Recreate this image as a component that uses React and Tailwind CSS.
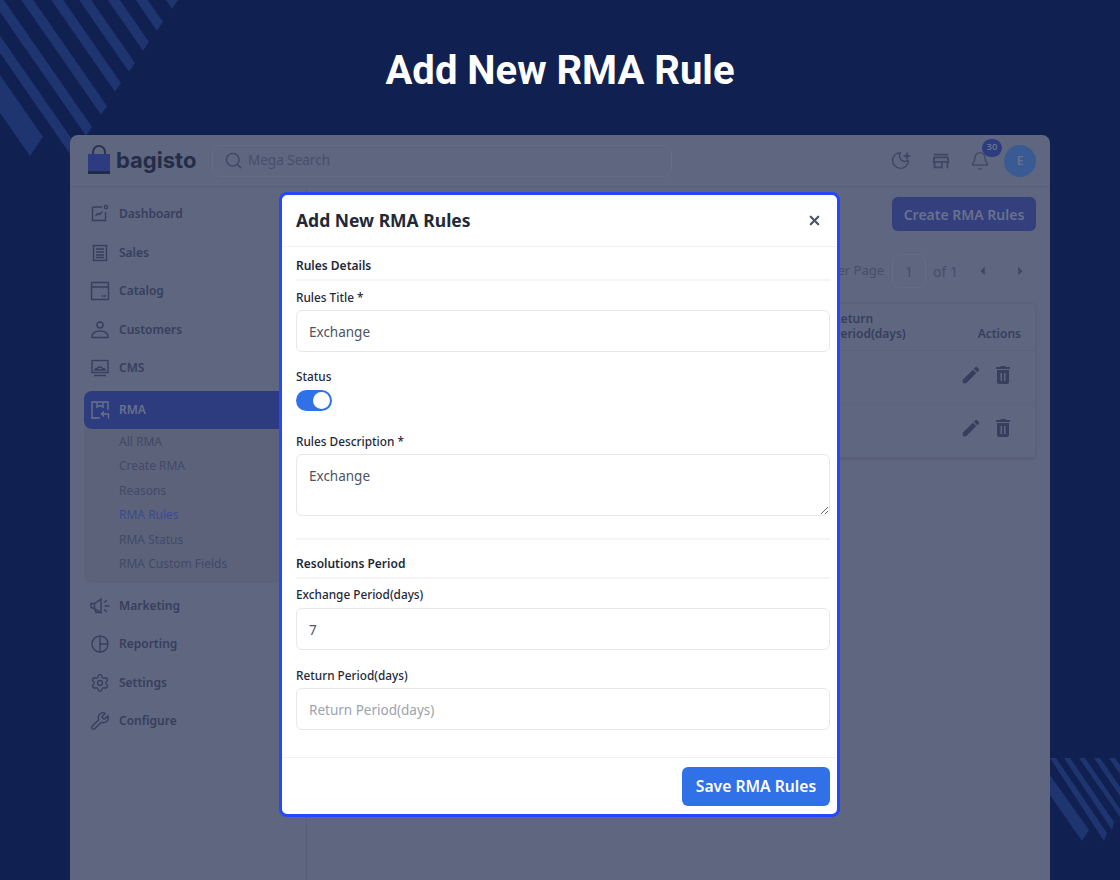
import React from "react";
import { Search, Moon, Bell, Settings, Wrench, X, Sparkle } from "lucide-react";
import { MdEdit, MdArrowLeft, MdArrowRight, MdOutlineStore } from "react-icons/md";

const ubuntu = "font-['Noto_Sans','Open_Sans',sans-serif]";

// stripes: tip corner of each band, width is the step back along the cut
const topStripes = [
    [178, 0, 6], [163, 22, 6], [149, 42, 6], [135, 63, 6], [121, 83, 6], [107, 106, 6], [92, 127, 6], [78, 148, 6], [43, 137, 13],
];
const bottomStripes = [
    "1050,775 1089,830 1082,841 1050,795",
    "1050,758 1056,758 1107,833 1104,841",
    "1064,758 1070,758 1114,822 1112,830",
    "1079,758 1085,758 1120,809 1120,817",
    "1094,758 1100,758 1120,787 1120,796",
    "1109,758 1115,758 1120,765 1120,774",
];

const Stripes = () => (
    <svg className="absolute left-0 top-0 h-[880px] w-[1120px]" viewBox="0 0 1120 880">
        {topStripes.map(([x, y, t], i) => (
            <polygon
                key={i}
                fill="#1f3570"
                points={`${x},${y} ${x - t},${y + t * 1.46} ${x - t - 200},${y + t * 1.46 - 288} ${x - 200},${y - 288}`}
            />
        ))}
        {bottomStripes.map((p, i) => (
            <polygon key={i} fill="#1f3570" points={p} />
        ))}
    </svg>
);

const Logo = () => (
    <div className="flex items-center gap-[5px]">
        <svg width="24" height="32" viewBox="0 0 24 32">
            <path d="M6 11V7a6 6 0 0 1 12 0v4" fill="none" stroke="#2a3350" strokeWidth="2" />
            <rect x="1" y="9" width="22" height="19" fill="#2d3c80" />
            <rect x="1" y="26" width="22" height="3" fill="#222b45" />
        </svg>
        <span className="w-[81px] font-['Inter',sans-serif] text-[22px] font-bold text-[#242c48]">bagisto</span>
    </div>
);

const iconProps = {
    width: 20,
    height: 20,
    viewBox: "0 0 20 20",
    fill: "none",
    stroke: "#363f5e",
    strokeWidth: 1.4,
};

const DashIcon = () => (
    <svg {...iconProps}>
        <path d="M12 3H3.5a1 1 0 0 0-1 1v12.5h13V8" />
        <circle cx="16" cy="3" r="1.6" />
        <path d="M5.5 12l2.5-2.5 1.5 1 3-3" />
    </svg>
);
const SalesIcon = () => (
    <svg {...iconProps}>
        <rect x="3.5" y="2.5" width="13" height="15" />
        <path d="M6 6h8M6 9h8M6 12h8M6 14.5h8" />
    </svg>
);
const CatalogIcon = () => (
    <svg {...iconProps}>
        <rect x="1.5" y="1.5" width="17" height="17" rx="0.5" />
        <path d="M1.5 6h17M12.5 14v2M15 14v2" />
    </svg>
);
const CustomersIcon = () => (
    <svg {...iconProps}>
        <circle cx="10" cy="5" r="3" />
        <path d="M2 17.5v-1c0-3.5 3.5-5.5 8-5.5s8 2 8 5.5v1z" />
    </svg>
);
const CmsIcon = () => (
    <svg {...iconProps}>
        <rect x="2" y="2.5" width="16" height="12" />
        <path d="M5 12c0-1.500 1.500-1.500 2.500-1.500 0-2 4.500-2 5 0 1 0 2.500 0 2.500 1.500zM4 17.500h12" />
    </svg>
);
const RmaIcon = () => (
    <svg {...iconProps} stroke="#69718d">
        <path d="M18 10V2H2v16h8M7 2v5l3-1.500L13 7V2" />
        <path d="M18.500 18.500V14H12M14 11.500L11.500 14l2.500 2.500" />
    </svg>
);
const MarketingIcon = () => (
    <svg {...iconProps}>
        <path d="M11 3L4.500 7.500H1v4l3.500 1 6.500 4.500zM4.500 7.500v5l1.500 4h2.500l-1-2.500M14 6.500l3-2.500M14.500 10h5M14 13.500l3 2.500" />
    </svg>
);
const ReportingIcon = () => (
    <svg {...iconProps}>
        <circle cx="10" cy="10" r="8" />
        <path d="M10 2v16M10 10h8" />
    </svg>
);
const TrashIcon = () => (
    <svg width="24" height="24" viewBox="0 0 24 24" fill="#363f5e">
        <path
            fillRule="evenodd"
            d="M5 4h4l1-1h4l1 1h4v2H5zM6 7h12v12a2 2 0 0 1-2 2H8a2 2 0 0 1-2-2zM9.500 10v8h1.500v-8zM13 10v8h1.500v-8z"
        />
    </svg>
);

const NavItem = ({ Icon, label }) => (
    <div className="flex h-[38.5px] items-center gap-[9px] pl-[20px]">
        <span className="flex w-[20px] justify-center"><Icon /></span>
        <span className="text-[12px] font-semibold text-[#363f5e]">{label}</span>
    </div>
);

const Sidebar = () => (
    <aside className="flex w-[237px] shrink-0 flex-col border-r border-[#575e77] pt-[8px]">
        <NavItem Icon={DashIcon} label="Dashboard" />
        <NavItem Icon={SalesIcon} label="Sales" />
        <NavItem Icon={CatalogIcon} label="Catalog" />
        <NavItem Icon={CustomersIcon} label="Customers" />
        <NavItem Icon={CmsIcon} label="CMS" />
        <div className="mt-[3px] ml-[14px] w-[210px] rounded-lg bg-[#5b6279]">
            <div className="flex h-[38px] items-center gap-[9px] rounded-lg bg-[#2d3c7e] pl-[6px]">
                <span className="flex w-[20px] justify-center"><RmaIcon /></span>
                <span className="pt-[1px] text-[12px] font-semibold text-[#69718d]">RMA</span>
            </div>
            <div className="flex flex-col pb-[6px] pl-[35px] pt-[1px] text-[12px] text-[#414a68]">
                {["All RMA", "Create RMA", "Reasons", "RMA Rules", "RMA Status", "RMA Custom Fields"].map((s) => (
                    <span key={s} className={`flex h-[24.5px] items-center ${s === "RMA Rules" ? "text-[#3b4a92]" : ""}`}>
                        {s}
                    </span>
                ))}
            </div>
        </div>
        <div className="mt-[4px]">
            <NavItem Icon={MarketingIcon} label="Marketing" />
            <NavItem Icon={ReportingIcon} label="Reporting" />
            <NavItem Icon={() => <Settings size={20} strokeWidth={1.6} color="#363f5e" />} label="Settings" />
            <NavItem Icon={() => <Wrench size={20} strokeWidth={1.6} color="#363f5e" />} label="Configure" />
        </div>
    </aside>
);

const Header = () => (
    <header className="flex h-[52px] shrink-0 items-center justify-between border-b border-[#585f78] pl-[17px] pr-[14px]">
        <div className="flex items-center gap-[15px]">
            <Logo />
            <div className="flex h-[32px] w-[460px] items-center gap-[5px] rounded-lg border border-[#656c85] pl-[11px]">
                <Search size={19} strokeWidth={1.8} color="#3e4763" />
                <span className="text-[13.5px] text-[#464f6c]">Mega Search</span>
            </div>
        </div>
        <div className="flex items-center">
            <span className="relative">
                <Moon size={21} strokeWidth={1.6} color="#3e4763" />
                <Sparkle size={8} className="absolute right-[0px] top-[2px]" color="#3e4763" fill="#3e4763" />
            </span>
            <MdOutlineStore size={22} color="#3e4763" className="ml-[19px]" />
            <span className="relative ml-[18px]">
                <Bell size={20} strokeWidth={1.6} color="#3e4763" />
                <span className="absolute left-[12px] top-[-12px] flex h-[18px] w-[20px] items-center justify-center rounded-full bg-[#2d3c7e] text-[9.5px] font-semibold text-[#69718d]">30</span>
            </span>
            <span className="ml-[14px] flex h-[32px] w-[32px] items-center justify-center rounded-full bg-[#3a5a94] text-[12px] font-semibold text-[#69718d]">E</span>
        </div>
    </header>
);

const Main = () => (
    <main className="flex flex-1 flex-col items-end pr-[14px] pt-[10px]">
        <button className="h-[34px] w-[144px] rounded-md bg-[#343f7e] text-[14px] font-semibold text-[#69718d]">Create RMA Rules</button>
        <div className="mt-[23px] flex h-[34px] items-center text-[14px] text-[#464f6c]">
            <span className="text-[13px]">Per Page</span>
            <span className="ml-[8px] flex h-[34px] w-[34px] items-center justify-center rounded-lg border border-[#656c85]">1</span>
            <span className="ml-[7px]">of 1</span>
            <MdArrowLeft size={20} className="ml-[15px]" color="#3e4763" />
            <MdArrowRight size={20} className="ml-[17px] mr-[6px]" color="#3e4763" />
        </div>
        <div className="mt-[15px] w-full rounded border border-[#5a6179] shadow-sm">
            <div className="flex h-[47px] items-end justify-between border-b border-[#5a6179] pb-[9px] pl-[525px] pr-[14px] text-[12px] font-semibold leading-[15px] text-[#363f5e]">
                <span>Return<br />Period(days)</span>
                <span>Actions</span>
            </div>
            {[0, 1].map((i) => (
                <div key={i} className="flex h-[53px] items-center justify-end gap-[9px] border-b border-[#5c637b] pb-[5px] pr-[20px] last:border-b-0">
                    <MdEdit size={22} color="#363f5e" />
                    <TrashIcon />
                </div>
            ))}
        </div>
    </main>
);

const Field = ({ label, className = "", children }) => (
    <div className={className}>
        <label className="block text-[11.8px] font-medium leading-[16px] text-[#1f2937]">{label}</label>
        {children}
    </div>
);

const TextBox = ({ value, placeholder }) => (
    <input
        readOnly
        value={value}
        placeholder={placeholder}
        className="mt-[5px] block h-[42px] w-full rounded-md border border-[#e5e7eb] px-[12px] pt-[2px] text-[13.5px] text-[#4b5563] outline-none placeholder:text-[#9ca3af]"
    />
);

const SectionTitle = ({ children }) => (
    <div className="border-b-2 border-[#f3f4f6] pb-[5px] text-[12px] font-semibold leading-[16px] text-[#1f2937]">{children}</div>
);

const Modal = () => (
    <div className="absolute left-[209px] top-[57px] w-[561px] rounded-lg border-[3px] border-[#2447ff] bg-white">
        <div className="flex h-[52px] items-center justify-between border-b border-[#f0f1f3] pl-[14px] pr-[15px]">
            <h2 className="text-[17.5px] font-bold text-[#1f2937]">Add New RMA Rules</h2>
            <X size={15} strokeWidth={3.5} color="#4b5563" />
        </div>
        <div className="flex h-[510px] flex-col pl-[14px] pr-[7px] pt-[11px]">
            <SectionTitle>Rules Details</SectionTitle>
            <Field label="Rules Title *" className="mt-[8px]"><TextBox value="Exchange" /></Field>
            <Field label="Status" className="mt-[16px]">
                <div className="mt-[6px] flex h-[21px] w-[36px] items-center justify-end rounded-full bg-[#3071e8] pr-[2px]">
                    <span className="h-[17px] w-[17px] rounded-full bg-white" />
                </div>
            </Field>
            <Field label="Rules Description *" className="mt-[22px]">
                <textarea
                    readOnly
                    value="Exchange"
                    className="mt-[5px] block h-[62px] w-full rounded-md border border-[#e5e7eb] px-[12px] pb-[10px] pt-[11px] text-[13.5px] text-[#4b5563] outline-none"
                />
            </Field>
            <div className="mt-[22px] border-b-2 border-[#f3f4f6]" />
            <div className="mt-[16px]"><SectionTitle>Resolutions Period</SectionTitle></div>
            <Field label="Exchange Period(days)" className="mt-[7px]">
                <div className="pt-[1px]"><TextBox value="7" /></div>
            </Field>
            <Field label="Return Period(days)" className="mt-[17px]"><TextBox value="" placeholder="Return Period(days)" /></Field>
        </div>
        <div className="flex h-[57px] items-start justify-end border-t border-[#f0f1f3] pr-[7px] pt-[9px]">
            <button className="h-[39px] w-[148px] rounded-md bg-[#3071e8] text-[15.7px] font-semibold text-white">Save RMA Rules</button>
        </div>
    </div>
);

export default function App() {
    return (
        <div className={`relative flex h-[880px] w-[1120px] flex-col overflow-hidden bg-[#102050] ${ubuntu}`}>
            <Stripes />
            <h1 className="relative mt-[46px] h-[89px] text-center font-['Roboto',sans-serif] text-[40px] font-bold leading-[50px] text-white">Add New RMA Rule</h1>
            <div className="relative mx-[70px] flex flex-1 flex-col rounded-t-lg bg-[#5f667f]">
                <Header />
                <div className="flex flex-1">
                    <Sidebar />
                    <Main />
                </div>
                <Modal />
            </div>
        </div>
    );
}
